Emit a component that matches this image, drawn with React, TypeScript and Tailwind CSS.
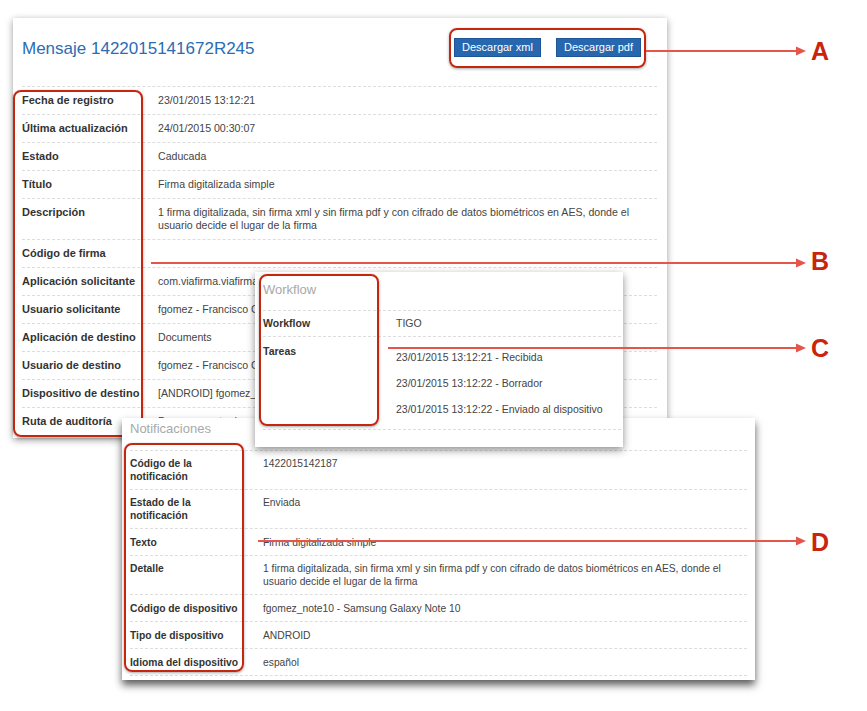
import React from "react";

const font = "font-['Liberation_Sans',Arial,Helvetica,sans-serif]";

const mainRows: { label: string; value: React.ReactNode }[] = [
  { label: "Fecha de registro", value: "23/01/2015 13:12:21" },
  { label: "Última actualización", value: "24/01/2015 00:30:07" },
  { label: "Estado", value: "Caducada" },
  { label: "Título", value: "Firma digitalizada simple" },
  {
    label: "Descripción",
    value: (
      <>
        1 firma digitalizada, sin firma xml y sin firma pdf y con cifrado de datos biométricos en AES, donde el
        <br />
        usuario decide el lugar de la firma
      </>
    ),
  },
  { label: "Código de firma", value: "" },
  { label: "Aplicación solicitante", value: "com.viafirma.viafirma.documents" },
  { label: "Usuario solicitante", value: "fgomez - Francisco Gómez" },
  { label: "Aplicación de destino", value: "Documents" },
  { label: "Usuario de destino", value: "fgomez - Francisco Gómez" },
  { label: "Dispositivo de destino", value: "[ANDROID] fgomez_note10 - Samsung Galaxy Note 10" },
  { label: "Ruta de auditoría", value: "Descargar ruta de auditoría" },
];

const notifRows: { label: string; value: React.ReactNode; double?: boolean }[] = [
  { label: "Código de la notificación", value: "1422015142187", double: true },
  { label: "Estado de la notificación", value: "Enviada", double: true },
  { label: "Texto", value: "Firma digitalizada simple" },
  {
    label: "Detalle",
    double: true,
    value: (
      <>
        1 firma digitalizada, sin firma xml y sin firma pdf y con cifrado de datos biométricos en AES, donde el
        <br />
        usuario decide el lugar de la firma
      </>
    ),
  },
  { label: "Código de dispositivo", value: "fgomez_note10 - Samsung Galaxy Note 10" },
  { label: "Tipo de dispositivo", value: "ANDROID" },
  { label: "Idioma del dispositivo", value: "español" },
];

const tasks = [
  "23/01/2015 13:12:21 - Recibida",
  "23/01/2015 13:12:22 - Borrador",
  "23/01/2015 13:12:22 - Enviado al dispositivo",
];

// red rounded frame drawn over a panel
function Callout({ className }: { className: string }) {
  return (
    <div
      className={`absolute rounded-[8px] border-[2.5px] border-[#c4260f] shadow-[0_1px_3px_rgba(0,0,0,0.35)] pointer-events-none ${className}`}
    />
  );
}

function Arrow({ x, y }: { x: number; y: number }) {
  return (
    <g>
      <line x1={x} y1={y} x2={798} y2={y} stroke="#e5554b" strokeWidth={2} />
      <polygon points={`796,${y - 4.5} 806,${y} 796,${y + 4.5}`} fill="#e5554b" />
    </g>
  );
}

function Letter({ children, top }: { children: string; top: string }) {
  return (
    <div className={`absolute left-[811px] ${top} text-[25px] leading-[25px] font-bold text-[#c9240c] ${font}`}>
      {children}
    </div>
  );
}

export default function App() {
  return (
    <div className={`relative w-[867px] h-[711px] overflow-hidden bg-white ${font}`}>
      {/* Mensaje window */}
      <div className="absolute left-[13px] top-[18px] z-10 w-[654px] h-[420px] bg-white pl-[9px] pr-[10px] shadow-[0_2px_7px_rgba(0,0,0,0.4)]">
        <div className="flex items-center justify-between h-[62px]">
          <h1 className="text-[17px] text-[#2b6cb3]">Mensaje 1422015141672R245</h1>
          <div className="flex gap-[15px] pr-[16px] mb-[3px]">
            <button className="w-[87px] h-[19px] bg-[#2767af] border border-[#1d5596] text-white text-[11px] leading-none">
              Descargar xml
            </button>
            <button className="w-[85px] h-[19px] bg-[#2767af] border border-[#1d5596] text-white text-[11px] leading-none">
              Descargar pdf
            </button>
          </div>
        </div>
        <div className="mt-[6px] border-t border-dashed border-[#dddddd]">
          {mainRows.map((row) => (
            <div
              key={row.label}
              className="flex py-[7px] text-[11px] leading-[13px] border-b border-dashed border-[#dddddd]"
            >
              <div className="w-[136px] shrink-0 font-bold text-[#333]">{row.label}</div>
              <div className="text-[10.6px] text-[#444] whitespace-nowrap">{row.value}</div>
            </div>
          ))}
        </div>
        <Callout className="left-[436px] top-[10px] w-[197px] h-[40px]" />
        <Callout className="left-0 top-[72px] w-[130px] h-[347px]" />
      </div>

      {/* Notificaciones window */}
      <div className="absolute left-[122px] top-[418px] z-20 w-[633px] h-[262px] bg-white pl-[8px] pr-[8px] shadow-[0_5px_8px_rgba(0,0,0,0.65)]">
        <div className="h-[32px] pt-[3px] text-[13px] leading-[16px] text-[#a8a8a8]">Notificaciones</div>
        <div className="border-t border-dashed border-[#dddddd]">
          {notifRows.map((row) => (
            <div
              key={row.label}
              className={`flex ${row.double ? "py-[6px]" : "py-[6.5px]"} text-[10.3px] leading-[13px] border-b border-dashed border-[#dddddd]`}
            >
              <div className="w-[133px] shrink-0 pr-[14px] font-bold text-[#333]">{row.label}</div>
              <div className="text-[#444] whitespace-nowrap">{row.value}</div>
            </div>
          ))}
        </div>
        <Callout className="left-[2px] top-[25px] w-[120px] h-[229px]" />
      </div>

      {/* Workflow window */}
      <div className="absolute left-[255px] top-[272px] z-30 w-[368px] h-[175px] bg-white pl-[8px] pr-[2px] shadow-[0_3px_8px_rgba(0,0,0,0.45)]">
        <div className="h-[38px] pt-[10px] text-[13px] leading-[16px] text-[#a8a8a8]">Workflow</div>
        <div className="border-t border-dashed border-[#dddddd] text-[10.5px] leading-[13px]">
          <div className="flex py-[6px] border-b border-dashed border-[#dddddd]">
            <div className="w-[133px] shrink-0 font-bold text-[#333]">Workflow</div>
            <div className="text-[#444]">TIGO</div>
          </div>
          <div className="flex border-b border-dashed border-[#dddddd]">
            <div className="w-[133px] shrink-0 pt-[8px] font-bold text-[#333]">Tareas</div>
            <ul className="pt-[14px] text-[#444]">
              {tasks.map((t) => (
                <li key={t} className="mb-[13px]">
                  {t}
                </li>
              ))}
            </ul>
          </div>
        </div>
        <Callout className="left-[4px] top-[2px] w-[120px] h-[152px]" />
      </div>

      {/* annotation arrows */}
      <svg className="absolute inset-0 z-40 pointer-events-none" width="867" height="711">
        <Arrow x={646} y={51} />
        <Arrow x={151} y={263} />
        <Arrow x={388} y={348} />
        <Arrow x={258} y={541} />
      </svg>
      <div className="absolute inset-0 z-50 pointer-events-none">
        <Letter top="top-[39px]">A</Letter>
        <Letter top="top-[249px]">B</Letter>
        <Letter top="top-[336px]">C</Letter>
        <Letter top="top-[530px]">D</Letter>
      </div>
    </div>
  );
}
